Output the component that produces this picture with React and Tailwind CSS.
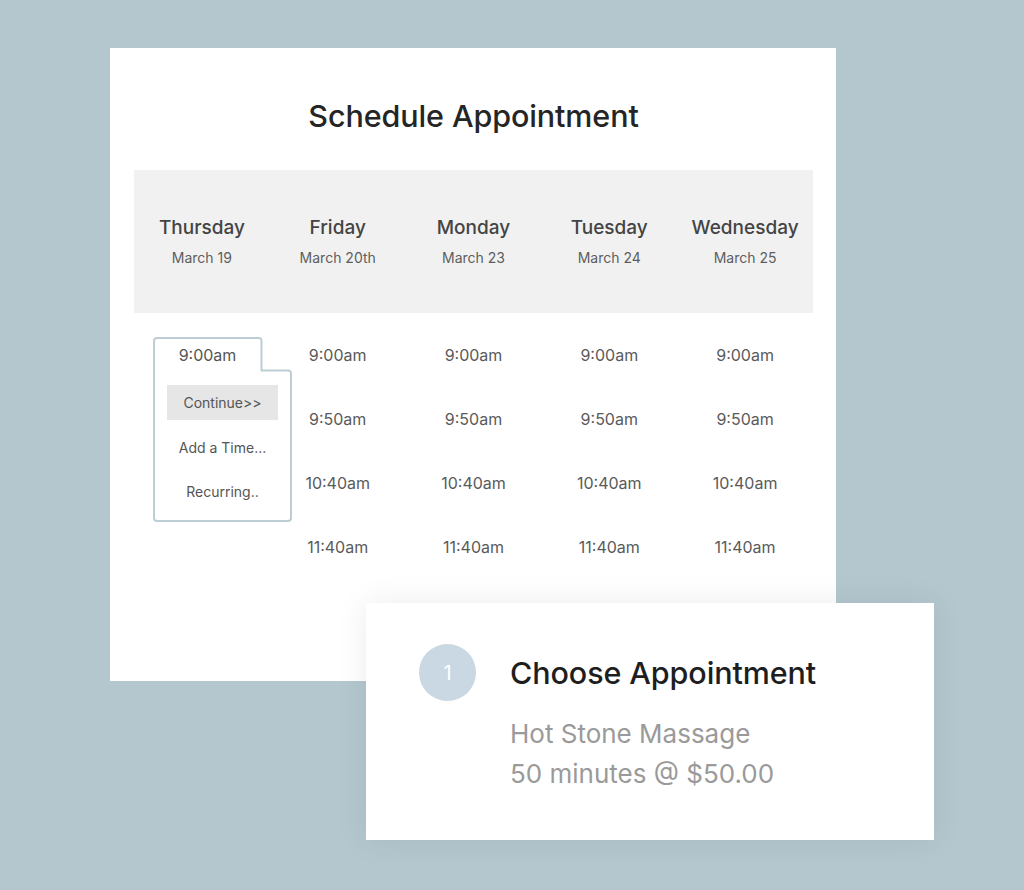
import React from "react";

const days = [
  { name: "Thursday", date: "March 19" },
  { name: "Friday", date: "March 20th" },
  { name: "Monday", date: "March 23" },
  { name: "Tuesday", date: "March 24" },
  { name: "Wednesday", date: "March 25" },
];
const times = ["9:00am", "9:50am", "10:40am", "11:40am"];

function Popup() {
  return (
    <div className="relative ml-[19px] mt-[14px] w-[139px] h-[185px]">
      <svg className="absolute inset-0" width="139" height="185" viewBox="0 0 139 185" fill="none">
        <path
          d="M1 4 Q1 1 4 1 L106 1 Q108.5 1 108.5 4 L108.5 33.5 L135 33.5 Q138 33.5 138 36.5 L138 181 Q138 184 135 184 L4 184 Q1 184 1 181 Z"
          stroke="#bccdd6"
          strokeWidth="2"
        />
      </svg>
      <div className="relative flex flex-col">
        <div className="w-[109px] h-[36px] flex items-center justify-center text-[16px] text-[#555]">9:00am</div>
        <div className="mx-[14px] mt-[12px] h-[35px] bg-[#e6e6e6] flex items-center justify-center text-[14px] text-[#555]">
          Continue&gt;&gt;
        </div>
        <div className="h-[24px] mt-[15px] flex items-center justify-center text-[14px] text-[#555]">Add a Time...</div>
        <div className="h-[24px] mt-[20px] flex items-center justify-center text-[14px] text-[#555]">Recurring..</div>
      </div>
    </div>
  );
}

export default function App() {
  return (
    <div
      className="w-[1024px] h-[890px] bg-[#b4c7cf] overflow-hidden relative"
      style={{ fontFamily: "Inter, 'Noto Sans', sans-serif" }}
    >
      <div className="ml-[110px] mt-[48px] w-[726px] h-[633px] bg-white pl-[24px] pr-[23px] pt-[98px] box-border">
        <h1 className="-mt-[48px] h-[36px] flex items-center justify-center text-[30.5px] font-medium text-[#252525] tracking-[-0.1px]">
          Schedule Appointment
        </h1>
        <div className="mt-[36px] h-[143px] bg-[#f1f1f1] grid grid-cols-5">
          {days.map((d) => (
            <div key={d.name} className="flex flex-col items-center pt-[46px]">
              <div className="h-[24px] flex items-center text-[19px] text-[#444] font-medium">{d.name}</div>
              <div className="mt-[8px] h-[18px] flex items-center text-[14px] text-[#5e5e5e]">{d.date}</div>
            </div>
          ))}
        </div>
        <div className="grid grid-cols-5 pt-[10px]">
          <div>
            <Popup />
          </div>
          {[1, 2, 3, 4].map((c) => (
            <div key={c} className="flex flex-col">
              {times.map((t) => (
                <div key={t} className="h-[64px] flex items-center justify-center text-[16px] text-[#5a5a5a]">
                  {t}
                </div>
              ))}
            </div>
          ))}
        </div>
      </div>

      <div className="absolute left-[366px] top-[603px] w-[568px] h-[237px] bg-white shadow-[0_0_30px_rgba(0,0,0,0.08)] flex items-start pl-[53px] pt-[41px]">
        <div className="w-[57px] h-[57px] shrink-0 rounded-full bg-[#c9d8e2] flex items-center justify-center text-white text-[20px]">
          1
        </div>
        <div className="ml-[34px] flex flex-col">
          <div className="h-[57px] flex items-center text-[30.5px] font-medium text-[#1e1e1e] tracking-[-0.1px]">
            Choose Appointment
          </div>
          <div className="mt-[17px] h-[30px] flex items-center text-[26px] text-[#9a9a9a]">Hot Stone Massage</div>
          <div className="mt-[10px] h-[30px] flex items-center text-[26px] text-[#9a9a9a]">50 minutes @ $50.00</div>
        </div>
      </div>
    </div>
  );
}
